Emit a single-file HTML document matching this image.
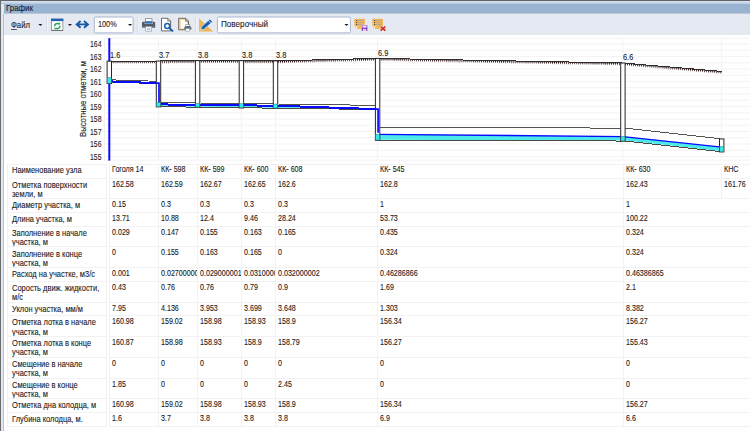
<!DOCTYPE html>
<html><head><meta charset="utf-8"><title>График</title>
<style>
html,body{margin:0;padding:0;}
body{width:750px;height:431px;overflow:hidden;background:#fff;position:relative;font-family:"Liberation Sans", sans-serif;color:#1a1a1a;}
.a{position:absolute;}
.t{position:absolute;white-space:nowrap;font-size:8.2px;line-height:9.2px;transform:scaleX(.9);transform-origin:0 0;color:#1a1a1a;-webkit-text-stroke:.1px #1a1a1a;}
.c{position:absolute;overflow:hidden;}
.h{position:absolute;height:1px;background:#f2f2f2;}
.v{position:absolute;width:1px;background:#f2f2f2;}
.t.n{transform:scaleX(.87);}
.t.l{transform:scaleX(.915);}
</style></head><body>
<!-- frame -->
<div class="a" style="left:0;top:0;width:750px;height:14.4px;background:#99b4d1;"></div>
<div class="a" style="left:0;top:13.2px;width:750px;height:1.2px;background:#bcc6d4;"></div>
<div class="a" style="left:0;top:14.4px;width:750px;height:20.2px;background:#e5e9f1;"></div>
<div class="a" style="left:0;top:0;width:3.8px;height:431px;background:#e1e9f4;"></div>
<div class="a" style="left:2.8px;top:13.5px;width:1.1px;height:418px;background:linear-gradient(90deg,#c3cbd9,#aab4c6);"></div>
<div class="a" style="left:0;top:1px;width:750px;height:2.7px;background:linear-gradient(#dce6f2,#b3c8e0);"></div>
<div class="a" style="left:0;top:0;width:1.2px;height:431px;background:#6a6a6a;"></div>
<div class="a" style="left:0;top:0;width:750px;height:1.2px;background:#636363;"></div>
<div class="a" style="left:6px;top:3.2px;font-size:9.2px;line-height:10px;white-space:nowrap;transform:scaleX(.86);transform-origin:0 0;color:#1a1a26;-webkit-text-stroke:.12px #1a1a26;">График</div>
<!-- toolbar -->
<div class="a" style="left:10.6px;top:19.9px;font-size:8.3px;line-height:10px;white-space:nowrap;transform:scaleX(.93);transform-origin:0 0;color:#1c1c28;-webkit-text-stroke:.1px #1c1c28;"><span style="text-decoration:underline;text-decoration-thickness:.7px;text-decoration-color:#555;text-underline-offset:1.1px;">Ф</span>айл</div>
<svg class="a" style="left:0;top:14px;" width="400" height="22" viewBox="0 14 400 22">
<!-- separators -->
<path d="M46.6 16.2V32.6M137.8 16.2V32.6M195.6 16.2V32.6" stroke="#d6dae3" stroke-width="1"/>
<path d="M47.6 16.2V32.6M138.8 16.2V32.6M196.6 16.2V32.6" stroke="#f3f5f9" stroke-width="1"/>
<!-- window refresh icon -->
<rect x="51.4" y="19.1" width="11.5" height="11.2" fill="#fff" stroke="#8a8a8a" stroke-width=".8"/>
<rect x="51" y="18.7" width="12.3" height="2.4" fill="#1f62b4"/>
<path d="M51.2 30.5H63.1" stroke="#6e6e6e" stroke-width=".9"/>
<path d="M54.6 26.3a2.7 2.7 0 0 1 4.4-2.2M60 25.8a2.7 2.7 0 0 1-4.4 2.2" fill="none" stroke="#27a35a" stroke-width="1.5"/>
<path d="M58.1 22.6l2.3.3-.6 2.3zM56.5 29.5l-2.3-.3.6-2.3z" fill="#27a35a"/>
<!-- double arrow -->
<path d="M80.6 21L76.7 24.4L80.6 27.8M84 21L87.9 24.4L84 27.8M77.2 24.4H87.4" fill="none" stroke="#1558a8" stroke-width="1.9" stroke-linejoin="miter"/>
<!-- combo 1 -->
<rect x="94.3" y="17" width="38.8" height="15.9" rx="1.3" fill="#fff" stroke="#a9b6cf" stroke-width="1"/>
<!-- printer -->
<rect x="145.4" y="18.7" width="6.6" height="4" fill="#fff" stroke="#777" stroke-width=".7"/>
<rect x="145.2" y="21.2" width="7" height="2.4" fill="#2a6fc0"/>
<path d="M142 23.2a1.4 1.4 0 0 1 1.4-1.4h1.4v2.2h7.8v-2.2h1.2a1.4 1.4 0 0 1 1.4 1.4v4.6h-13.2z" fill="#555b62"/>
<path d="M142 26.6h13.2v1.2h-13.2z" fill="#8a8f96"/>
<rect x="145.7" y="26.6" width="6" height="4.5" fill="#fff" stroke="#8d949c" stroke-width=".6"/>
<path d="M147 28.4h3.4M147 29.6h3.4" stroke="#7fb0e4" stroke-width=".7"/>
<!-- preview -->
<path d="M161.5 18.3h6.3l2.8 2.8v9.8h-9.1z" fill="#fff" stroke="#5a5a5a" stroke-width=".9"/>
<path d="M167.8 18.3v2.8h2.8" fill="none" stroke="#5a5a5a" stroke-width=".7"/>
<circle cx="167.2" cy="26" r="2.5" fill="#fff" stroke="#1b5fae" stroke-width="1.5"/>
<path d="M169.2 28l3.4 3" stroke="#1b5fae" stroke-width="1.8" stroke-linecap="round"/>
<!-- page setup -->
<path d="M178.7 18.3h6.9l2.9 2.9v8.6h-9.8z" fill="#f9dcae" stroke="#5a5a5a" stroke-width=".9"/>
<path d="M181 20h4.2l1.4 1.6v6.6H181z" fill="#fff"/>
<path d="M185.6 18.3v2.9h2.9" fill="none" stroke="#5a5a5a" stroke-width=".7"/>
<rect x="185.8" y="24.6" width="4" height="2.4" fill="#fff" stroke="#777" stroke-width=".5"/>
<rect x="185.7" y="26" width="4.2" height="1.4" fill="#2a6fc0"/>
<path d="M184.3 27.2a.8.8 0 0 1 .8-.8h5.4a.8.8 0 0 1 .8.8v2.5h-7z" fill="#666c73"/>
<rect x="185.9" y="28.6" width="3.8" height="2.6" fill="#fff" stroke="#8d949c" stroke-width=".5"/>
<!-- design -->
<path d="M199.1 18.6V31.6H213.2z" fill="#f0b64e"/>
<path d="M202 26.4v3h3.2" fill="none" stroke="#d99a2e" stroke-width=".7"/>
<path d="M200.6 30l1-3.4 8.3-7.6 2.6 2.8-8.4 7.5z" fill="#1a5fb5" stroke="#e9edf4" stroke-width=".8"/>
<path d="M208.3 20.4l2.7 2.9" stroke="#e9edf4" stroke-width=".8"/>
<!-- combo 2 -->
<rect x="217.4" y="17" width="133" height="15.9" rx="1.3" fill="#fff" stroke="#a9b6cf" stroke-width="1"/>
<!-- note + save -->
<path d="M354.3 18.7h10.7v10.3h-7.6l-3.1-3.1z" fill="#f2b85c"/>
<path d="M354.3 25.9h3.1v3.1z" fill="#f8dcae"/>
<path d="M356 20.5h1.2M356 22.6h1.2M356 24.6h1.2" stroke="#4a4036" stroke-width="1"/>
<path d="M358.2 20.5h5.3M358.2 22.6h5.3M358.2 24.6h5.3" stroke="#a8a296" stroke-width=".9"/>
<rect x="361.3" y="25" width="6.4" height="6" rx=".8" fill="#8d3fc0" stroke="#efe4f7" stroke-width=".6"/>
<rect x="362.5" y="25.6" width="4" height="2" fill="#f3e9fa"/>
<rect x="363" y="29" width="3" height="2" fill="#e3cdf2"/>
<!-- note + X -->
<path d="M372.3 18.7h10.7v10.3h-7.6l-3.1-3.1z" fill="#f2b85c"/>
<path d="M372.3 25.9h3.1v3.1z" fill="#f8dcae"/>
<path d="M374 20.5h1.2M374 22.6h1.2M374 24.6h1.2" stroke="#4a4036" stroke-width="1"/>
<path d="M376.2 20.5h5.3M376.2 22.6h5.3M376.2 24.6h5.3" stroke="#a8a296" stroke-width=".9"/>
<path d="M380.6 26.5l4.8 4.2M385.4 26.5l-4.8 4.2" stroke="#e9edf4" stroke-width="2.6"/>
<path d="M380.6 26.5l4.8 4.2M385.4 26.5l-4.8 4.2" stroke="#d02818" stroke-width="1.6"/>
<!-- dropdown arrows -->
<path d="M38.3 23.9h4.1l-2.05 2.2zM67.9 23.9h4.1l-2.05 2.2zM128 23.9h4.1l-2.05 2.2zM344.4 23.9h4.1l-2.05 2.2z" fill="#1c1c2a"/>
</svg>
<div class="a" style="left:97.6px;top:18.8px;font-size:8.3px;line-height:10px;white-space:nowrap;transform:scaleX(.88);transform-origin:0 0;color:#1c1c28;-webkit-text-stroke:.1px #1c1c28;">100%</div>
<div class="a" style="left:221.3px;top:18.8px;font-size:8.3px;line-height:10px;white-space:nowrap;transform:scaleX(.98);transform-origin:0 0;color:#1c1c28;-webkit-text-stroke:.1px #1c1c28;">Поверочный</div>
<!-- chart -->
<svg class="a" style="left:0;top:0;" width="750" height="431" viewBox="0 0 750 431">
<path d="M104.5 44.00H750M104.5 50.25H750M104.5 56.50H750M104.5 62.75H750M104.5 69.00H750M104.5 75.25H750M104.5 81.50H750M104.5 87.75H750M104.5 94.00H750M104.5 100.25H750M104.5 106.50H750M104.5 112.75H750M104.5 119.00H750M104.5 125.25H750M104.5 131.50H750M104.5 137.75H750M104.5 144.00H750M104.5 150.25H750M104.5 156.50H750M104.5 38.3H750M104.5 160.2H750M104.5 38.3V160.2M158.5 38.3V160.2M197.6 38.3V160.2M241.4 38.3V160.2M275.5 38.3V160.2M377.6 38.3V160.2M622.9 38.3V160.2M721.7 38.3V160.2" stroke="#f3f3f3" stroke-width="1" fill="none"/>
<path d="M109.3 38.2V160.6" stroke="#0a0aff" stroke-width="2" fill="none"/>
<path d="M111.15 61.34L111.90 63.84L112.65 61.34ZM113.18 61.34L113.93 63.84L114.68 61.34ZM115.21 61.33L115.96 63.83L116.71 61.33ZM117.24 61.33L117.99 63.83L118.74 61.33ZM119.27 61.32L120.02 63.82L120.77 61.32ZM121.30 61.32L122.05 63.82L122.80 61.32ZM123.33 61.31L124.08 63.81L124.83 61.31ZM125.36 61.31L126.11 63.81L126.86 61.31ZM127.39 61.30L128.14 63.80L128.89 61.30ZM129.42 61.30L130.17 63.80L130.92 61.30ZM131.45 61.29L132.20 63.79L132.95 61.29ZM133.48 61.29L134.23 63.79L134.98 61.29ZM135.51 61.28L136.26 63.78L137.01 61.28ZM137.54 61.28L138.29 63.78L139.04 61.28ZM139.57 61.27L140.32 63.77L141.07 61.27ZM141.60 61.27L142.35 63.77L143.10 61.27ZM143.63 61.26L144.38 63.76L145.13 61.26ZM145.66 61.26L146.41 63.76L147.16 61.26ZM147.69 61.25L148.44 63.75L149.19 61.25ZM149.72 61.25L150.47 63.75L151.22 61.25ZM151.75 61.24L152.50 63.74L153.25 61.24ZM153.78 61.24L154.53 63.74L155.28 61.24ZM155.81 61.23L156.56 63.73L157.31 61.23ZM157.84 61.22L158.59 63.72L159.34 61.22ZM159.87 61.20L160.62 63.70L161.37 61.20ZM161.90 61.19L162.65 63.69L163.40 61.19ZM163.93 61.17L164.68 63.67L165.43 61.17ZM165.96 61.15L166.71 63.65L167.46 61.15ZM167.99 61.13L168.74 63.63L169.49 61.13ZM170.02 61.11L170.77 63.61L171.52 61.11ZM172.05 61.09L172.80 63.59L173.55 61.09ZM174.08 61.07L174.83 63.57L175.58 61.07ZM176.11 61.05L176.86 63.55L177.61 61.05ZM178.14 61.03L178.89 63.53L179.64 61.03ZM180.17 61.01L180.92 63.51L181.67 61.01ZM182.20 60.99L182.95 63.49L183.70 60.99ZM184.23 60.97L184.98 63.47L185.73 60.97ZM186.26 60.95L187.01 63.45L187.76 60.95ZM188.29 60.93L189.04 63.43L189.79 60.93ZM190.32 60.91L191.07 63.41L191.82 60.91ZM192.35 60.89L193.10 63.39L193.85 60.89ZM194.38 60.87L195.13 63.37L195.88 60.87ZM196.41 60.85L197.16 63.35L197.91 60.85ZM198.44 60.85L199.19 63.35L199.94 60.85ZM200.47 60.85L201.22 63.35L201.97 60.85ZM202.50 60.85L203.25 63.35L204.00 60.85ZM204.53 60.85L205.28 63.35L206.03 60.85ZM206.56 60.85L207.31 63.35L208.06 60.85ZM208.59 60.85L209.34 63.35L210.09 60.85ZM210.62 60.85L211.37 63.35L212.12 60.85ZM212.65 60.85L213.40 63.35L214.15 60.85ZM214.68 60.85L215.43 63.35L216.18 60.85ZM216.71 60.85L217.46 63.35L218.21 60.85ZM218.74 60.85L219.49 63.35L220.24 60.85ZM220.77 60.85L221.52 63.35L222.27 60.85ZM222.80 60.85L223.55 63.35L224.30 60.85ZM224.83 60.85L225.58 63.35L226.33 60.85ZM226.86 60.85L227.61 63.35L228.36 60.85ZM228.89 60.85L229.64 63.35L230.39 60.85ZM230.92 60.85L231.67 63.35L232.42 60.85ZM232.95 60.85L233.70 63.35L234.45 60.85ZM234.98 60.85L235.73 63.35L236.48 60.85ZM237.01 60.85L237.76 63.35L238.51 60.85ZM239.04 60.85L239.79 63.35L240.54 60.85ZM241.07 60.85L241.82 63.35L242.57 60.85ZM243.10 60.87L243.85 63.37L244.60 60.87ZM245.13 60.88L245.88 63.38L246.63 60.88ZM247.16 60.90L247.91 63.40L248.66 60.90ZM249.19 60.91L249.94 63.41L250.69 60.91ZM251.22 60.93L251.97 63.43L252.72 60.93ZM253.25 60.94L254.00 63.44L254.75 60.94ZM255.28 60.96L256.03 63.46L256.78 60.96ZM257.31 60.97L258.06 63.47L258.81 60.97ZM259.34 60.99L260.09 63.49L260.84 60.99ZM261.37 61.00L262.12 63.50L262.87 61.00ZM263.40 61.02L264.15 63.52L264.90 61.02ZM265.43 61.03L266.18 63.53L266.93 61.03ZM267.46 61.05L268.21 63.55L268.96 61.05ZM269.49 61.06L270.24 63.56L270.99 61.06ZM271.52 61.08L272.27 63.58L273.02 61.08ZM273.55 61.09L274.30 63.59L275.05 61.09ZM275.58 61.08L276.33 63.58L277.08 61.08ZM277.61 61.03L278.36 63.53L279.11 61.03ZM279.64 60.98L280.39 63.48L281.14 60.98ZM281.67 60.93L282.42 63.43L283.17 60.93ZM283.70 60.88L284.45 63.38L285.20 60.88ZM285.73 60.83L286.48 63.33L287.23 60.83ZM287.76 60.78L288.51 63.28L289.26 60.78ZM289.79 60.73L290.54 63.23L291.29 60.73ZM291.82 60.68L292.57 63.18L293.32 60.68ZM293.85 60.63L294.60 63.13L295.35 60.63ZM295.88 60.58L296.63 63.08L297.38 60.58ZM297.91 60.53L298.66 63.03L299.41 60.53ZM299.94 60.48L300.69 62.98L301.44 60.48ZM301.97 60.43L302.72 62.93L303.47 60.43ZM304.00 60.38L304.75 62.88L305.50 60.38ZM306.03 60.33L306.78 62.83L307.53 60.33ZM308.06 60.28L308.81 62.78L309.56 60.28ZM310.09 60.23L310.84 62.73L311.59 60.23ZM312.12 60.18L312.87 62.68L313.62 60.18ZM314.15 60.14L314.90 62.64L315.65 60.14ZM316.18 60.09L316.93 62.59L317.68 60.09ZM318.21 60.04L318.96 62.54L319.71 60.04ZM320.24 59.99L320.99 62.49L321.74 59.99ZM322.27 59.94L323.02 62.44L323.77 59.94ZM324.30 59.89L325.05 62.39L325.80 59.89ZM326.33 59.84L327.08 62.34L327.83 59.84ZM328.36 59.79L329.11 62.29L329.86 59.79ZM330.39 59.74L331.14 62.24L331.89 59.74ZM332.42 59.69L333.17 62.19L333.92 59.69ZM334.45 59.64L335.20 62.14L335.95 59.64ZM336.48 59.59L337.23 62.09L337.98 59.59ZM338.51 59.54L339.26 62.04L340.01 59.54ZM340.54 59.49L341.29 61.99L342.04 59.49ZM342.57 59.44L343.32 61.94L344.07 59.44ZM344.60 59.39L345.35 61.89L346.10 59.39ZM346.63 59.34L347.38 61.84L348.13 59.34ZM348.66 59.29L349.41 61.79L350.16 59.29ZM350.69 59.24L351.44 61.74L352.19 59.24ZM352.72 59.19L353.47 61.69L354.22 59.19ZM354.75 59.14L355.50 61.64L356.25 59.14ZM356.78 59.09L357.53 61.59L358.28 59.09ZM358.81 59.04L359.56 61.54L360.31 59.04ZM360.84 58.99L361.59 61.49L362.34 58.99ZM362.87 58.94L363.62 61.44L364.37 58.94ZM364.90 58.89L365.65 61.39L366.40 58.89ZM366.93 58.84L367.68 61.34L368.43 58.84ZM368.96 58.79L369.71 61.29L370.46 58.79ZM370.99 58.74L371.74 61.24L372.49 58.74ZM373.02 58.69L373.77 61.19L374.52 58.69ZM375.05 58.64L375.80 61.14L376.55 58.64ZM377.08 58.60L377.83 61.10L378.58 58.60ZM379.11 58.64L379.86 61.14L380.61 58.64ZM381.14 58.68L381.89 61.18L382.64 58.68ZM383.17 58.72L383.92 61.22L384.67 58.72ZM385.20 58.76L385.95 61.26L386.70 58.76ZM387.23 58.80L387.98 61.30L388.73 58.80ZM389.26 58.83L390.01 61.33L390.76 58.83ZM391.29 58.87L392.04 61.37L392.79 58.87ZM393.32 58.91L394.07 61.41L394.82 58.91ZM395.35 58.95L396.10 61.45L396.85 58.95ZM397.38 58.99L398.13 61.49L398.88 58.99ZM399.41 59.03L400.16 61.53L400.91 59.03ZM401.44 59.06L402.19 61.56L402.94 59.06ZM403.47 59.10L404.22 61.60L404.97 59.10ZM405.50 59.14L406.25 61.64L407.00 59.14ZM407.53 59.18L408.28 61.68L409.03 59.18ZM409.56 59.22L410.31 61.72L411.06 59.22ZM411.59 59.26L412.34 61.76L413.09 59.26ZM413.62 59.29L414.37 61.79L415.12 59.29ZM415.65 59.33L416.40 61.83L417.15 59.33ZM417.68 59.37L418.43 61.87L419.18 59.37ZM419.71 59.41L420.46 61.91L421.21 59.41ZM421.74 59.45L422.49 61.95L423.24 59.45ZM423.77 59.48L424.52 61.98L425.27 59.48ZM425.80 59.52L426.55 62.02L427.30 59.52ZM427.83 59.56L428.58 62.06L429.33 59.56ZM429.86 59.60L430.61 62.10L431.36 59.60ZM431.89 59.64L432.64 62.14L433.39 59.64ZM433.92 59.68L434.67 62.18L435.42 59.68ZM435.95 59.71L436.70 62.21L437.45 59.71ZM437.98 59.75L438.73 62.25L439.48 59.75ZM440.01 59.79L440.76 62.29L441.51 59.79ZM442.04 59.83L442.79 62.33L443.54 59.83ZM444.07 59.87L444.82 62.37L445.57 59.87ZM446.10 59.91L446.85 62.41L447.60 59.91ZM448.13 59.94L448.88 62.44L449.63 59.94ZM450.16 59.98L450.91 62.48L451.66 59.98ZM452.19 60.02L452.94 62.52L453.69 60.02ZM454.22 60.06L454.97 62.56L455.72 60.06ZM456.25 60.10L457.00 62.60L457.75 60.10ZM458.28 60.14L459.03 62.64L459.78 60.14ZM460.31 60.17L461.06 62.67L461.81 60.17ZM462.34 60.21L463.09 62.71L463.84 60.21ZM464.37 60.25L465.12 62.75L465.87 60.25ZM466.40 60.29L467.15 62.79L467.90 60.29ZM468.43 60.33L469.18 62.83L469.93 60.33ZM470.46 60.36L471.21 62.86L471.96 60.36ZM472.49 60.40L473.24 62.90L473.99 60.40ZM474.52 60.44L475.27 62.94L476.02 60.44ZM476.55 60.48L477.30 62.98L478.05 60.48ZM478.58 60.52L479.33 63.02L480.08 60.52ZM480.61 60.56L481.36 63.06L482.11 60.56ZM482.64 60.59L483.39 63.09L484.14 60.59ZM484.67 60.63L485.42 63.13L486.17 60.63ZM486.70 60.67L487.45 63.17L488.20 60.67ZM488.73 60.71L489.48 63.21L490.23 60.71ZM490.76 60.75L491.51 63.25L492.26 60.75ZM492.79 60.79L493.54 63.29L494.29 60.79ZM494.82 60.82L495.57 63.32L496.32 60.82ZM496.85 60.86L497.60 63.36L498.35 60.86ZM498.88 60.90L499.63 63.40L500.38 60.90ZM500.91 60.94L501.66 63.44L502.41 60.94ZM502.94 60.98L503.69 63.48L504.44 60.98ZM504.97 61.02L505.72 63.52L506.47 61.02ZM507.00 61.05L507.75 63.55L508.50 61.05ZM509.03 61.09L509.78 63.59L510.53 61.09ZM511.06 61.13L511.81 63.63L512.56 61.13ZM513.09 61.17L513.84 63.67L514.59 61.17ZM515.12 61.21L515.87 63.71L516.62 61.21ZM517.15 61.25L517.90 63.75L518.65 61.25ZM519.18 61.28L519.93 63.78L520.68 61.28ZM521.21 61.32L521.96 63.82L522.71 61.32ZM523.24 61.36L523.99 63.86L524.74 61.36ZM525.27 61.40L526.02 63.90L526.77 61.40ZM527.30 61.44L528.05 63.94L528.80 61.44ZM529.33 61.47L530.08 63.97L530.83 61.47ZM531.36 61.51L532.11 64.01L532.86 61.51ZM533.39 61.55L534.14 64.05L534.89 61.55ZM535.42 61.59L536.17 64.09L536.92 61.59ZM537.45 61.63L538.20 64.13L538.95 61.63ZM539.48 61.67L540.23 64.17L540.98 61.67ZM541.51 61.70L542.26 64.20L543.01 61.70ZM543.54 61.74L544.29 64.24L545.04 61.74ZM545.57 61.78L546.32 64.28L547.07 61.78ZM547.60 61.82L548.35 64.32L549.10 61.82ZM549.63 61.86L550.38 64.36L551.13 61.86ZM551.66 61.90L552.41 64.40L553.16 61.90ZM553.69 61.93L554.44 64.43L555.19 61.93ZM555.72 61.97L556.47 64.47L557.22 61.97ZM557.75 62.01L558.50 64.51L559.25 62.01ZM559.78 62.05L560.53 64.55L561.28 62.05ZM561.81 62.09L562.56 64.59L563.31 62.09ZM563.84 62.13L564.59 64.63L565.34 62.13ZM565.87 62.16L566.62 64.66L567.37 62.16ZM567.90 62.20L568.65 64.70L569.40 62.20ZM569.93 62.24L570.68 64.74L571.43 62.24ZM571.96 62.28L572.71 64.78L573.46 62.28ZM573.99 62.32L574.74 64.82L575.49 62.32ZM576.02 62.36L576.77 64.86L577.52 62.36ZM578.05 62.39L578.80 64.89L579.55 62.39ZM580.08 62.43L580.83 64.93L581.58 62.43ZM582.11 62.47L582.86 64.97L583.61 62.47ZM584.14 62.51L584.89 65.01L585.64 62.51ZM586.17 62.55L586.92 65.05L587.67 62.55ZM588.20 62.58L588.95 65.08L589.70 62.58ZM590.23 62.62L590.98 65.12L591.73 62.62ZM592.26 62.66L593.01 65.16L593.76 62.66ZM594.29 62.70L595.04 65.20L595.79 62.70ZM596.32 62.74L597.07 65.24L597.82 62.74ZM598.35 62.78L599.10 65.28L599.85 62.78ZM600.38 62.81L601.13 65.31L601.88 62.81ZM602.41 62.85L603.16 65.35L603.91 62.85ZM604.44 62.89L605.19 65.39L605.94 62.89ZM606.47 62.93L607.22 65.43L607.97 62.93ZM608.50 62.97L609.25 65.47L610.00 62.97ZM610.53 63.01L611.28 65.51L612.03 63.01ZM612.56 63.04L613.31 65.54L614.06 63.04ZM614.59 63.08L615.34 65.58L616.09 63.08ZM616.62 63.12L617.37 65.62L618.12 63.12ZM618.65 63.16L619.40 65.66L620.15 63.16ZM620.68 63.20L621.43 65.70L622.18 63.20ZM622.71 63.27L623.46 65.77L624.21 63.27ZM624.74 63.44L625.49 65.94L626.24 63.44ZM626.77 63.62L627.52 66.12L628.27 63.62ZM628.80 63.79L629.55 66.29L630.30 63.79ZM630.83 63.96L631.58 66.46L632.33 63.96ZM632.86 64.13L633.61 66.63L634.36 64.13ZM634.89 64.30L635.64 66.80L636.39 64.30ZM636.92 64.48L637.67 66.98L638.42 64.48ZM638.95 64.65L639.70 67.15L640.45 64.65ZM640.98 64.82L641.73 67.32L642.48 64.82ZM643.01 64.99L643.76 67.49L644.51 64.99ZM645.04 65.17L645.79 67.67L646.54 65.17ZM647.07 65.34L647.82 67.84L648.57 65.34ZM649.10 65.51L649.85 68.01L650.60 65.51ZM651.13 65.68L651.88 68.18L652.63 65.68ZM653.16 65.85L653.91 68.35L654.66 65.85ZM655.19 66.03L655.94 68.53L656.69 66.03ZM657.22 66.20L657.97 68.70L658.72 66.20ZM659.25 66.37L660.00 68.87L660.75 66.37ZM661.28 66.54L662.03 69.04L662.78 66.54ZM663.31 66.71L664.06 69.21L664.81 66.71ZM665.34 66.89L666.09 69.39L666.84 66.89ZM667.37 67.06L668.12 69.56L668.87 67.06ZM669.40 67.23L670.15 69.73L670.90 67.23ZM671.43 67.40L672.18 69.90L672.93 67.40ZM673.46 67.57L674.21 70.07L674.96 67.57ZM675.49 67.75L676.24 70.25L676.99 67.75ZM677.52 67.92L678.27 70.42L679.02 67.92ZM679.55 68.09L680.30 70.59L681.05 68.09ZM681.58 68.26L682.33 70.76L683.08 68.26ZM683.61 68.43L684.36 70.93L685.11 68.43ZM685.64 68.61L686.39 71.11L687.14 68.61ZM687.67 68.78L688.42 71.28L689.17 68.78ZM689.70 68.95L690.45 71.45L691.20 68.95ZM691.73 69.12L692.48 71.62L693.23 69.12ZM693.76 69.30L694.51 71.80L695.26 69.30ZM695.79 69.47L696.54 71.97L697.29 69.47ZM697.82 69.64L698.57 72.14L699.32 69.64ZM699.85 69.81L700.60 72.31L701.35 69.81ZM701.88 69.98L702.63 72.48L703.38 69.98ZM703.91 70.16L704.66 72.66L705.41 70.16ZM705.94 70.33L706.69 72.83L707.44 70.33ZM707.97 70.50L708.72 73.00L709.47 70.50ZM710.00 70.67L710.75 73.17L711.50 70.67ZM712.03 70.84L712.78 73.34L713.53 70.84ZM714.06 71.02L714.81 73.52L715.56 71.02ZM716.09 71.19L716.84 73.69L717.59 71.19ZM718.12 71.36L718.87 73.86L719.62 71.36ZM720.15 71.53L720.90 74.03L721.65 71.53Z" fill="#2c0e0e" stroke="none"/>
<path d="M109.3 61.15 L158.5 61.02 L197.6 60.65 L241.4 60.65 L275.5 60.90 L377.6 58.40 L622.9 63.02 L721.7 71.40" stroke="#2e2e2e" stroke-width="1" fill="none" shape-rendering="crispEdges"/>
<path d="M111.5 79.88L156.3 81.25L156.3 83.12L111.5 81.75Z" fill="#fff" stroke="none"/>
<path d="M111.5 81.39L156.3 83.12L156.3 83.12L111.5 81.75Z" fill="#4ce9e9" stroke="none"/>
<path d="M111.5 79.88L156.3 81.25" stroke="#55554f" stroke-width="1" fill="none" shape-rendering="crispEdges"/>
<path d="M111.5 82.15L156.3 83.52" stroke="#4a4a44" stroke-width="1" fill="none" shape-rendering="crispEdges"/>
<path d="M160.7 102.50L195.4 103.00L195.4 106.75L160.7 106.25Z" fill="#fff" stroke="none"/>
<path d="M160.7 104.41L195.4 104.81L195.4 106.75L160.7 106.25Z" fill="#4ce9e9" stroke="none"/>
<path d="M160.7 102.50L195.4 103.00" stroke="#55554f" stroke-width="1" fill="none" shape-rendering="crispEdges"/>
<path d="M160.7 106.65L195.4 107.15" stroke="#4a4a44" stroke-width="1" fill="none" shape-rendering="crispEdges"/>
<path d="M199.79999999999998 103.00L239.20000000000002 103.62L239.20000000000002 107.37L199.79999999999998 106.75Z" fill="#fff" stroke="none"/>
<path d="M199.79999999999998 104.81L239.20000000000002 105.34L239.20000000000002 107.37L199.79999999999998 106.75Z" fill="#4ce9e9" stroke="none"/>
<path d="M199.79999999999998 103.00L239.20000000000002 103.62" stroke="#55554f" stroke-width="1" fill="none" shape-rendering="crispEdges"/>
<path d="M199.79999999999998 107.15L239.20000000000002 107.77" stroke="#4a4a44" stroke-width="1" fill="none" shape-rendering="crispEdges"/>
<path d="M243.6 103.62L273.3 104.00L273.3 107.75L243.6 107.37Z" fill="#fff" stroke="none"/>
<path d="M243.6 105.34L273.3 105.69L273.3 107.75L243.6 107.37Z" fill="#4ce9e9" stroke="none"/>
<path d="M243.6 103.62L273.3 104.00" stroke="#55554f" stroke-width="1" fill="none" shape-rendering="crispEdges"/>
<path d="M243.6 107.77L273.3 108.15" stroke="#4a4a44" stroke-width="1" fill="none" shape-rendering="crispEdges"/>
<path d="M277.7 104.00L375.40000000000003 105.37L375.40000000000003 109.13L277.7 107.75Z" fill="#fff" stroke="none"/>
<path d="M277.7 105.69L375.40000000000003 109.13L375.40000000000003 109.13L277.7 107.75Z" fill="#4ce9e9" stroke="none"/>
<path d="M277.7 104.00L375.40000000000003 105.37" stroke="#55554f" stroke-width="1" fill="none" shape-rendering="crispEdges"/>
<path d="M277.7 108.15L375.40000000000003 109.53" stroke="#4a4a44" stroke-width="1" fill="none" shape-rendering="crispEdges"/>
<path d="M379.8 127.25L620.6999999999999 128.12L620.6999999999999 140.62L379.8 139.75Z" fill="#fff" stroke="none"/>
<path d="M379.8 134.31L620.6999999999999 136.57L620.6999999999999 140.62L379.8 139.75Z" fill="#4ce9e9" stroke="none"/>
<path d="M379.8 127.25L620.6999999999999 128.12" stroke="#55554f" stroke-width="1" fill="none" shape-rendering="crispEdges"/>
<path d="M379.8 140.15L620.6999999999999 141.02" stroke="#4a4a44" stroke-width="1" fill="none" shape-rendering="crispEdges"/>
<path d="M625.1 128.12L719.5 138.62L719.5 151.12L625.1 140.62Z" fill="#fff" stroke="none"/>
<path d="M625.1 136.57L719.5 147.07L719.5 151.12L625.1 140.62Z" fill="#4ce9e9" stroke="none"/>
<path d="M625.1 128.12L719.5 138.62" stroke="#55554f" stroke-width="1" fill="none" shape-rendering="crispEdges"/>
<path d="M625.1 141.02L719.5 151.52" stroke="#4a4a44" stroke-width="1" fill="none" shape-rendering="crispEdges"/>
<path d="M109.3 81.39 L158.5 83.12 L158.5 104.41 L197.6 104.81 L197.6 104.81 L241.4 105.34 L241.4 105.34 L275.5 105.69 L275.5 105.69 L377.6 109.13" stroke="#0a0aff" stroke-width="2" fill="none" stroke-linejoin="miter" shape-rendering="crispEdges"/>
<path d="M377.6 134.31 L622.9 136.57 L622.9 136.57 L721.7 147.07" stroke="#0a0aff" stroke-width="1.35" fill="none" stroke-linejoin="miter"/>
<rect x="107.1" y="61.15" width="4.4" height="22.40" fill="#fff" stroke="#262626" stroke-width="1"/>
<rect x="156.3" y="61.02" width="4.4" height="45.82" fill="#fff" stroke="#262626" stroke-width="1"/>
<rect x="195.4" y="60.65" width="4.4" height="46.70" fill="#fff" stroke="#262626" stroke-width="1"/>
<rect x="239.2" y="60.65" width="4.4" height="47.32" fill="#fff" stroke="#262626" stroke-width="1"/>
<rect x="273.3" y="60.90" width="4.4" height="47.45" fill="#fff" stroke="#262626" stroke-width="1"/>
<rect x="375.4" y="58.40" width="4.4" height="81.95" fill="#fff" stroke="#262626" stroke-width="1"/>
<rect x="620.7" y="63.02" width="4.4" height="78.20" fill="#fff" stroke="#262626" stroke-width="1"/>
<rect x="719.5" y="138.92" width="4.4" height="13.00" fill="#fff" stroke="#262626" stroke-width="1"/>
<path d="M156.3 83.12H159.0V102.91" stroke="#0a0aff" stroke-width="1.7" fill="none"/>
<path d="M375.40000000000003 109.13H378.1V132.81" stroke="#0a0aff" stroke-width="1.7" fill="none"/>
<rect x="107.4" y="77.75" width="3.8" height="5.50" fill="#35eaea" stroke="#2a7a7a" stroke-width=".5"/>
<rect x="156.6" y="102.55" width="3.8" height="4.00" fill="#35eaea" stroke="#2a7a7a" stroke-width=".5"/>
<rect x="195.7" y="103.35" width="3.8" height="3.70" fill="#35eaea" stroke="#2a7a7a" stroke-width=".5"/>
<rect x="239.5" y="103.77" width="3.8" height="3.90" fill="#35eaea" stroke="#2a7a7a" stroke-width=".5"/>
<rect x="273.6" y="104.05" width="3.8" height="4.00" fill="#35eaea" stroke="#2a7a7a" stroke-width=".5"/>
<rect x="375.7" y="134.35" width="3.8" height="5.70" fill="#35eaea" stroke="#2a7a7a" stroke-width=".5"/>
<rect x="621.0" y="136.22" width="3.8" height="4.70" fill="#35eaea" stroke="#2a7a7a" stroke-width=".5"/>
<rect x="719.8" y="146.52" width="3.8" height="5.10" fill="#35eaea" stroke="#2a7a7a" stroke-width=".5"/>
</svg>
<div class="t" style="left:89.7px;top:40.2px;transform:scaleX(.84);">164</div>
<div class="t" style="left:89.7px;top:52.8px;transform:scaleX(.84);">163</div>
<div class="t" style="left:89.7px;top:65.2px;transform:scaleX(.84);">162</div>
<div class="t" style="left:89.7px;top:77.8px;transform:scaleX(.84);">161</div>
<div class="t" style="left:89.7px;top:90.2px;transform:scaleX(.84);">160</div>
<div class="t" style="left:89.7px;top:102.8px;transform:scaleX(.84);">159</div>
<div class="t" style="left:89.7px;top:115.2px;transform:scaleX(.84);">158</div>
<div class="t" style="left:89.7px;top:127.8px;transform:scaleX(.84);">157</div>
<div class="t" style="left:89.7px;top:140.2px;transform:scaleX(.84);">156</div>
<div class="t" style="left:89.7px;top:152.8px;transform:scaleX(.84);">155</div>
<div class="t" style="left:79.3px;top:136.9px;transform:rotate(-90deg) scaleX(.94);transform-origin:0 0;">Высотные отметки, м</div>
<div class="t" style="left:109.6px;top:51.4px;">1.6</div>
<div class="t" style="left:158.8px;top:51.3px;">3.7</div>
<div class="t" style="left:197.9px;top:50.9px;">3.8</div>
<div class="t" style="left:241.7px;top:50.9px;">3.8</div>
<div class="t" style="left:275.8px;top:51.2px;">3.8</div>
<div class="t" style="left:377.9px;top:48.7px;">6.9</div>
<div class="t" style="left:623.2px;top:53.3px;">6.6</div>
<!-- table -->
<div class="t l" style="left:11.5px;top:166.2px;">Наименование узла</div>
<div class="c" style="left:110.7px;top:165.3px;width:47.8px;height:12.7px;"><div class="t n" style="left:1.5px;top:-0.2px;">Гоголя 14</div></div>
<div class="c" style="left:159.5px;top:165.3px;width:38.3px;height:12.7px;"><div class="t n" style="left:1.5px;top:-0.2px;">КК- 598</div></div>
<div class="c" style="left:198.8px;top:165.3px;width:42.5px;height:12.7px;"><div class="t n" style="left:1.5px;top:-0.2px;">КК- 599</div></div>
<div class="c" style="left:242.3px;top:165.3px;width:33.3px;height:12.7px;"><div class="t n" style="left:1.5px;top:-0.2px;">КК- 600</div></div>
<div class="c" style="left:276.6px;top:165.3px;width:101.2px;height:12.7px;"><div class="t n" style="left:1.5px;top:-0.2px;">КК- 608</div></div>
<div class="c" style="left:378.8px;top:165.3px;width:244.8px;height:12.7px;"><div class="t n" style="left:1.5px;top:-0.2px;">КК- 545</div></div>
<div class="c" style="left:624.6px;top:165.3px;width:97.2px;height:12.7px;"><div class="t n" style="left:1.5px;top:-0.2px;">КК- 630</div></div>
<div class="c" style="left:722.8px;top:165.3px;width:27.2px;height:12.7px;"><div class="t n" style="left:1.5px;top:-0.2px;">КНС</div></div>
<div class="t l" style="left:11.5px;top:180.6px;">Отметка поверхности<br>земли, м</div>
<div class="c" style="left:110.7px;top:179.0px;width:47.8px;height:19.8px;"><div class="t n" style="left:1.5px;top:0.5px;">162.58</div></div>
<div class="c" style="left:159.5px;top:179.0px;width:38.3px;height:19.8px;"><div class="t n" style="left:1.5px;top:0.5px;">162.59</div></div>
<div class="c" style="left:198.8px;top:179.0px;width:42.5px;height:19.8px;"><div class="t n" style="left:1.5px;top:0.5px;">162.67</div></div>
<div class="c" style="left:242.3px;top:179.0px;width:33.3px;height:19.8px;"><div class="t n" style="left:1.5px;top:0.5px;">162.65</div></div>
<div class="c" style="left:276.6px;top:179.0px;width:101.2px;height:19.8px;"><div class="t n" style="left:1.5px;top:0.5px;">162.6</div></div>
<div class="c" style="left:378.8px;top:179.0px;width:244.8px;height:19.8px;"><div class="t n" style="left:1.5px;top:0.5px;">162.8</div></div>
<div class="c" style="left:624.6px;top:179.0px;width:97.2px;height:19.8px;"><div class="t n" style="left:1.5px;top:0.5px;">162.43</div></div>
<div class="c" style="left:722.8px;top:179.0px;width:27.2px;height:19.8px;"><div class="t n" style="left:1.5px;top:0.5px;">161.76</div></div>
<div class="t l" style="left:11.5px;top:201.3px;">Диаметр участка, м</div>
<div class="c" style="left:110.7px;top:199.8px;width:47.8px;height:12.7px;"><div class="t n" style="left:1.5px;top:0.5px;">0.15</div></div>
<div class="c" style="left:159.5px;top:199.8px;width:38.3px;height:12.7px;"><div class="t n" style="left:1.5px;top:0.5px;">0.3</div></div>
<div class="c" style="left:198.8px;top:199.8px;width:42.5px;height:12.7px;"><div class="t n" style="left:1.5px;top:0.5px;">0.3</div></div>
<div class="c" style="left:242.3px;top:199.8px;width:33.3px;height:12.7px;"><div class="t n" style="left:1.5px;top:0.5px;">0.3</div></div>
<div class="c" style="left:276.6px;top:199.8px;width:101.2px;height:12.7px;"><div class="t n" style="left:1.5px;top:0.5px;">0.3</div></div>
<div class="c" style="left:378.8px;top:199.8px;width:244.8px;height:12.7px;"><div class="t n" style="left:1.5px;top:0.5px;">1</div></div>
<div class="c" style="left:624.6px;top:199.8px;width:125.4px;height:12.7px;"><div class="t n" style="left:1.5px;top:0.5px;">1</div></div>
<div class="t l" style="left:11.5px;top:215.0px;">Длина участка, м</div>
<div class="c" style="left:110.7px;top:213.4px;width:47.8px;height:12.7px;"><div class="t n" style="left:1.5px;top:0.5px;">13.71</div></div>
<div class="c" style="left:159.5px;top:213.4px;width:38.3px;height:12.7px;"><div class="t n" style="left:1.5px;top:0.5px;">10.88</div></div>
<div class="c" style="left:198.8px;top:213.4px;width:42.5px;height:12.7px;"><div class="t n" style="left:1.5px;top:0.5px;">12.4</div></div>
<div class="c" style="left:242.3px;top:213.4px;width:33.3px;height:12.7px;"><div class="t n" style="left:1.5px;top:0.5px;">9.46</div></div>
<div class="c" style="left:276.6px;top:213.4px;width:101.2px;height:12.7px;"><div class="t n" style="left:1.5px;top:0.5px;">28.24</div></div>
<div class="c" style="left:378.8px;top:213.4px;width:244.8px;height:12.7px;"><div class="t n" style="left:1.5px;top:0.5px;">53.73</div></div>
<div class="c" style="left:624.6px;top:213.4px;width:125.4px;height:12.7px;"><div class="t n" style="left:1.5px;top:0.5px;">100.22</div></div>
<div class="t l" style="left:11.5px;top:228.7px;">Заполнение в начале<br>участка, м</div>
<div class="c" style="left:110.7px;top:227.1px;width:47.8px;height:19.8px;"><div class="t n" style="left:1.5px;top:0.5px;">0.029</div></div>
<div class="c" style="left:159.5px;top:227.1px;width:38.3px;height:19.8px;"><div class="t n" style="left:1.5px;top:0.5px;">0.147</div></div>
<div class="c" style="left:198.8px;top:227.1px;width:42.5px;height:19.8px;"><div class="t n" style="left:1.5px;top:0.5px;">0.155</div></div>
<div class="c" style="left:242.3px;top:227.1px;width:33.3px;height:19.8px;"><div class="t n" style="left:1.5px;top:0.5px;">0.163</div></div>
<div class="c" style="left:276.6px;top:227.1px;width:101.2px;height:19.8px;"><div class="t n" style="left:1.5px;top:0.5px;">0.165</div></div>
<div class="c" style="left:378.8px;top:227.1px;width:244.8px;height:19.8px;"><div class="t n" style="left:1.5px;top:0.5px;">0.435</div></div>
<div class="c" style="left:624.6px;top:227.1px;width:125.4px;height:19.8px;"><div class="t n" style="left:1.5px;top:0.5px;">0.324</div></div>
<div class="t l" style="left:11.5px;top:249.5px;">Заполнение в конце<br>участка, м</div>
<div class="c" style="left:110.7px;top:247.9px;width:47.8px;height:19.8px;"><div class="t n" style="left:1.5px;top:0.5px;">0</div></div>
<div class="c" style="left:159.5px;top:247.9px;width:38.3px;height:19.8px;"><div class="t n" style="left:1.5px;top:0.5px;">0.155</div></div>
<div class="c" style="left:198.8px;top:247.9px;width:42.5px;height:19.8px;"><div class="t n" style="left:1.5px;top:0.5px;">0.163</div></div>
<div class="c" style="left:242.3px;top:247.9px;width:33.3px;height:19.8px;"><div class="t n" style="left:1.5px;top:0.5px;">0.165</div></div>
<div class="c" style="left:276.6px;top:247.9px;width:101.2px;height:19.8px;"><div class="t n" style="left:1.5px;top:0.5px;">0</div></div>
<div class="c" style="left:378.8px;top:247.9px;width:244.8px;height:19.8px;"><div class="t n" style="left:1.5px;top:0.5px;">0.324</div></div>
<div class="c" style="left:624.6px;top:247.9px;width:125.4px;height:19.8px;"><div class="t n" style="left:1.5px;top:0.5px;">0.324</div></div>
<div class="t l" style="left:11.5px;top:270.2px;">Расход на участке, м3/с</div>
<div class="c" style="left:110.7px;top:268.6px;width:47.8px;height:12.7px;"><div class="t n" style="left:1.5px;top:0.5px;">0.001</div></div>
<div class="c" style="left:159.5px;top:268.6px;width:38.3px;height:12.7px;"><div class="t n" style="left:1.5px;top:0.5px;">0.027000001</div></div>
<div class="c" style="left:198.8px;top:268.6px;width:42.5px;height:12.7px;"><div class="t n" style="left:1.5px;top:0.5px;">0.029000001</div></div>
<div class="c" style="left:242.3px;top:268.6px;width:33.3px;height:12.7px;"><div class="t n" style="left:1.5px;top:0.5px;">0.031000001</div></div>
<div class="c" style="left:276.6px;top:268.6px;width:101.2px;height:12.7px;"><div class="t n" style="left:1.5px;top:0.5px;">0.032000002</div></div>
<div class="c" style="left:378.8px;top:268.6px;width:244.8px;height:12.7px;"><div class="t n" style="left:1.5px;top:0.5px;">0.46286866</div></div>
<div class="c" style="left:624.6px;top:268.6px;width:125.4px;height:12.7px;"><div class="t n" style="left:1.5px;top:0.5px;">0.46386865</div></div>
<div class="t l" style="left:11.5px;top:283.9px;">Сорость движ. жидкости,<br>м/с</div>
<div class="c" style="left:110.7px;top:282.3px;width:47.8px;height:19.8px;"><div class="t n" style="left:1.5px;top:0.5px;">0.43</div></div>
<div class="c" style="left:159.5px;top:282.3px;width:38.3px;height:19.8px;"><div class="t n" style="left:1.5px;top:0.5px;">0.76</div></div>
<div class="c" style="left:198.8px;top:282.3px;width:42.5px;height:19.8px;"><div class="t n" style="left:1.5px;top:0.5px;">0.76</div></div>
<div class="c" style="left:242.3px;top:282.3px;width:33.3px;height:19.8px;"><div class="t n" style="left:1.5px;top:0.5px;">0.79</div></div>
<div class="c" style="left:276.6px;top:282.3px;width:101.2px;height:19.8px;"><div class="t n" style="left:1.5px;top:0.5px;">0.9</div></div>
<div class="c" style="left:378.8px;top:282.3px;width:244.8px;height:19.8px;"><div class="t n" style="left:1.5px;top:0.5px;">1.69</div></div>
<div class="c" style="left:624.6px;top:282.3px;width:125.4px;height:19.8px;"><div class="t n" style="left:1.5px;top:0.5px;">2.1</div></div>
<div class="t l" style="left:11.5px;top:304.7px;">Уклон участка, мм/м</div>
<div class="c" style="left:110.7px;top:303.1px;width:47.8px;height:12.7px;"><div class="t n" style="left:1.5px;top:0.5px;">7.95</div></div>
<div class="c" style="left:159.5px;top:303.1px;width:38.3px;height:12.7px;"><div class="t n" style="left:1.5px;top:0.5px;">4.136</div></div>
<div class="c" style="left:198.8px;top:303.1px;width:42.5px;height:12.7px;"><div class="t n" style="left:1.5px;top:0.5px;">3.953</div></div>
<div class="c" style="left:242.3px;top:303.1px;width:33.3px;height:12.7px;"><div class="t n" style="left:1.5px;top:0.5px;">3.699</div></div>
<div class="c" style="left:276.6px;top:303.1px;width:101.2px;height:12.7px;"><div class="t n" style="left:1.5px;top:0.5px;">3.648</div></div>
<div class="c" style="left:378.8px;top:303.1px;width:244.8px;height:12.7px;"><div class="t n" style="left:1.5px;top:0.5px;">1.303</div></div>
<div class="c" style="left:624.6px;top:303.1px;width:125.4px;height:12.7px;"><div class="t n" style="left:1.5px;top:0.5px;">8.382</div></div>
<div class="t l" style="left:11.5px;top:318.4px;">Отметка лотка в начале<br>участка, м</div>
<div class="c" style="left:110.7px;top:316.8px;width:47.8px;height:19.8px;"><div class="t n" style="left:1.5px;top:0.5px;">160.98</div></div>
<div class="c" style="left:159.5px;top:316.8px;width:38.3px;height:19.8px;"><div class="t n" style="left:1.5px;top:0.5px;">159.02</div></div>
<div class="c" style="left:198.8px;top:316.8px;width:42.5px;height:19.8px;"><div class="t n" style="left:1.5px;top:0.5px;">158.98</div></div>
<div class="c" style="left:242.3px;top:316.8px;width:33.3px;height:19.8px;"><div class="t n" style="left:1.5px;top:0.5px;">158.93</div></div>
<div class="c" style="left:276.6px;top:316.8px;width:101.2px;height:19.8px;"><div class="t n" style="left:1.5px;top:0.5px;">158.9</div></div>
<div class="c" style="left:378.8px;top:316.8px;width:244.8px;height:19.8px;"><div class="t n" style="left:1.5px;top:0.5px;">156.34</div></div>
<div class="c" style="left:624.6px;top:316.8px;width:125.4px;height:19.8px;"><div class="t n" style="left:1.5px;top:0.5px;">156.27</div></div>
<div class="t l" style="left:11.5px;top:339.1px;">Отметка лотка в конце<br>участка, м</div>
<div class="c" style="left:110.7px;top:337.5px;width:47.8px;height:19.8px;"><div class="t n" style="left:1.5px;top:0.5px;">160.87</div></div>
<div class="c" style="left:159.5px;top:337.5px;width:38.3px;height:19.8px;"><div class="t n" style="left:1.5px;top:0.5px;">158.98</div></div>
<div class="c" style="left:198.8px;top:337.5px;width:42.5px;height:19.8px;"><div class="t n" style="left:1.5px;top:0.5px;">158.93</div></div>
<div class="c" style="left:242.3px;top:337.5px;width:33.3px;height:19.8px;"><div class="t n" style="left:1.5px;top:0.5px;">158.9</div></div>
<div class="c" style="left:276.6px;top:337.5px;width:101.2px;height:19.8px;"><div class="t n" style="left:1.5px;top:0.5px;">158.79</div></div>
<div class="c" style="left:378.8px;top:337.5px;width:244.8px;height:19.8px;"><div class="t n" style="left:1.5px;top:0.5px;">156.27</div></div>
<div class="c" style="left:624.6px;top:337.5px;width:125.4px;height:19.8px;"><div class="t n" style="left:1.5px;top:0.5px;">155.43</div></div>
<div class="t l" style="left:11.5px;top:359.9px;">Смещение в начале<br>участка, м</div>
<div class="c" style="left:110.7px;top:358.3px;width:47.8px;height:19.8px;"><div class="t n" style="left:1.5px;top:0.5px;">0</div></div>
<div class="c" style="left:159.5px;top:358.3px;width:38.3px;height:19.8px;"><div class="t n" style="left:1.5px;top:0.5px;">0</div></div>
<div class="c" style="left:198.8px;top:358.3px;width:42.5px;height:19.8px;"><div class="t n" style="left:1.5px;top:0.5px;">0</div></div>
<div class="c" style="left:242.3px;top:358.3px;width:33.3px;height:19.8px;"><div class="t n" style="left:1.5px;top:0.5px;">0</div></div>
<div class="c" style="left:276.6px;top:358.3px;width:101.2px;height:19.8px;"><div class="t n" style="left:1.5px;top:0.5px;">0</div></div>
<div class="c" style="left:378.8px;top:358.3px;width:244.8px;height:19.8px;"><div class="t n" style="left:1.5px;top:0.5px;">0</div></div>
<div class="c" style="left:624.6px;top:358.3px;width:125.4px;height:19.8px;"><div class="t n" style="left:1.5px;top:0.5px;">0</div></div>
<div class="t l" style="left:11.5px;top:380.6px;">Смещение в конце<br>участка, м</div>
<div class="c" style="left:110.7px;top:379.0px;width:47.8px;height:19.8px;"><div class="t n" style="left:1.5px;top:0.5px;">1.85</div></div>
<div class="c" style="left:159.5px;top:379.0px;width:38.3px;height:19.8px;"><div class="t n" style="left:1.5px;top:0.5px;">0</div></div>
<div class="c" style="left:198.8px;top:379.0px;width:42.5px;height:19.8px;"><div class="t n" style="left:1.5px;top:0.5px;">0</div></div>
<div class="c" style="left:242.3px;top:379.0px;width:33.3px;height:19.8px;"><div class="t n" style="left:1.5px;top:0.5px;">0</div></div>
<div class="c" style="left:276.6px;top:379.0px;width:101.2px;height:19.8px;"><div class="t n" style="left:1.5px;top:0.5px;">2.45</div></div>
<div class="c" style="left:378.8px;top:379.0px;width:244.8px;height:19.8px;"><div class="t n" style="left:1.5px;top:0.5px;">0</div></div>
<div class="c" style="left:624.6px;top:379.0px;width:125.4px;height:19.8px;"><div class="t n" style="left:1.5px;top:0.5px;">0</div></div>
<div class="t l" style="left:11.5px;top:401.4px;">Отметка дна колодца, м</div>
<div class="c" style="left:110.7px;top:399.8px;width:47.8px;height:12.7px;"><div class="t n" style="left:1.5px;top:0.5px;">160.98</div></div>
<div class="c" style="left:159.5px;top:399.8px;width:38.3px;height:12.7px;"><div class="t n" style="left:1.5px;top:0.5px;">159.02</div></div>
<div class="c" style="left:198.8px;top:399.8px;width:42.5px;height:12.7px;"><div class="t n" style="left:1.5px;top:0.5px;">158.98</div></div>
<div class="c" style="left:242.3px;top:399.8px;width:33.3px;height:12.7px;"><div class="t n" style="left:1.5px;top:0.5px;">158.93</div></div>
<div class="c" style="left:276.6px;top:399.8px;width:101.2px;height:12.7px;"><div class="t n" style="left:1.5px;top:0.5px;">158.9</div></div>
<div class="c" style="left:378.8px;top:399.8px;width:244.8px;height:12.7px;"><div class="t n" style="left:1.5px;top:0.5px;">156.34</div></div>
<div class="c" style="left:624.6px;top:399.8px;width:125.4px;height:12.7px;"><div class="t n" style="left:1.5px;top:0.5px;">156.27</div></div>
<div class="t l" style="left:11.5px;top:415.1px;">Глубина колодца, м.</div>
<div class="c" style="left:110.7px;top:413.5px;width:47.8px;height:12.7px;"><div class="t n" style="left:1.5px;top:0.5px;">1.6</div></div>
<div class="c" style="left:159.5px;top:413.5px;width:38.3px;height:12.7px;"><div class="t n" style="left:1.5px;top:0.5px;">3.7</div></div>
<div class="c" style="left:198.8px;top:413.5px;width:42.5px;height:12.7px;"><div class="t n" style="left:1.5px;top:0.5px;">3.8</div></div>
<div class="c" style="left:242.3px;top:413.5px;width:33.3px;height:12.7px;"><div class="t n" style="left:1.5px;top:0.5px;">3.8</div></div>
<div class="c" style="left:276.6px;top:413.5px;width:101.2px;height:12.7px;"><div class="t n" style="left:1.5px;top:0.5px;">3.8</div></div>
<div class="c" style="left:378.8px;top:413.5px;width:244.8px;height:12.7px;"><div class="t n" style="left:1.5px;top:0.5px;">6.9</div></div>
<div class="c" style="left:624.6px;top:413.5px;width:125.4px;height:12.7px;"><div class="t n" style="left:1.5px;top:0.5px;">6.6</div></div>
<div class="h" style="left:7px;top:163.8px;width:99.9px;"></div><div class="h" style="left:109.2px;top:163.8px;width:641px;"></div>
<div class="h" style="left:7px;top:177.5px;width:99.9px;"></div><div class="h" style="left:109.2px;top:177.5px;width:641px;"></div>
<div class="h" style="left:7px;top:198.2px;width:99.9px;"></div><div class="h" style="left:109.2px;top:198.2px;width:641px;"></div>
<div class="h" style="left:7px;top:211.9px;width:99.9px;"></div><div class="h" style="left:109.2px;top:211.9px;width:641px;"></div>
<div class="h" style="left:7px;top:225.6px;width:99.9px;"></div><div class="h" style="left:109.2px;top:225.6px;width:641px;"></div>
<div class="h" style="left:7px;top:246.4px;width:99.9px;"></div><div class="h" style="left:109.2px;top:246.4px;width:641px;"></div>
<div class="h" style="left:7px;top:267.1px;width:99.9px;"></div><div class="h" style="left:109.2px;top:267.1px;width:641px;"></div>
<div class="h" style="left:7px;top:280.8px;width:99.9px;"></div><div class="h" style="left:109.2px;top:280.8px;width:641px;"></div>
<div class="h" style="left:7px;top:301.6px;width:99.9px;"></div><div class="h" style="left:109.2px;top:301.6px;width:641px;"></div>
<div class="h" style="left:7px;top:315.3px;width:99.9px;"></div><div class="h" style="left:109.2px;top:315.3px;width:641px;"></div>
<div class="h" style="left:7px;top:336.0px;width:99.9px;"></div><div class="h" style="left:109.2px;top:336.0px;width:641px;"></div>
<div class="h" style="left:7px;top:356.8px;width:99.9px;"></div><div class="h" style="left:109.2px;top:356.8px;width:641px;"></div>
<div class="h" style="left:7px;top:377.5px;width:99.9px;"></div><div class="h" style="left:109.2px;top:377.5px;width:641px;"></div>
<div class="h" style="left:7px;top:398.3px;width:99.9px;"></div><div class="h" style="left:109.2px;top:398.3px;width:641px;"></div>
<div class="h" style="left:7px;top:412.0px;width:99.9px;"></div><div class="h" style="left:109.2px;top:412.0px;width:641px;"></div>
<div class="h" style="left:7px;top:425.7px;width:99.9px;"></div><div class="h" style="left:109.2px;top:425.7px;width:641px;"></div>
<div class="v" style="left:6.5px;top:163.8px;height:262.9px;"></div><div class="v" style="left:105.9px;top:163.8px;height:262.9px;"></div><div class="v" style="left:109.2px;top:163.8px;height:262.9px;"></div><div class="v" style="left:158.0px;top:163.8px;height:262.9px;"></div><div class="v" style="left:197.3px;top:163.8px;height:262.9px;"></div><div class="v" style="left:240.8px;top:163.8px;height:262.9px;"></div><div class="v" style="left:275.1px;top:163.8px;height:262.9px;"></div><div class="v" style="left:377.3px;top:163.8px;height:262.9px;"></div><div class="v" style="left:623.1px;top:163.8px;height:262.9px;"></div><div class="v" style="left:721.3px;top:163.8px;height:35.4px;"></div>
</body></html>
